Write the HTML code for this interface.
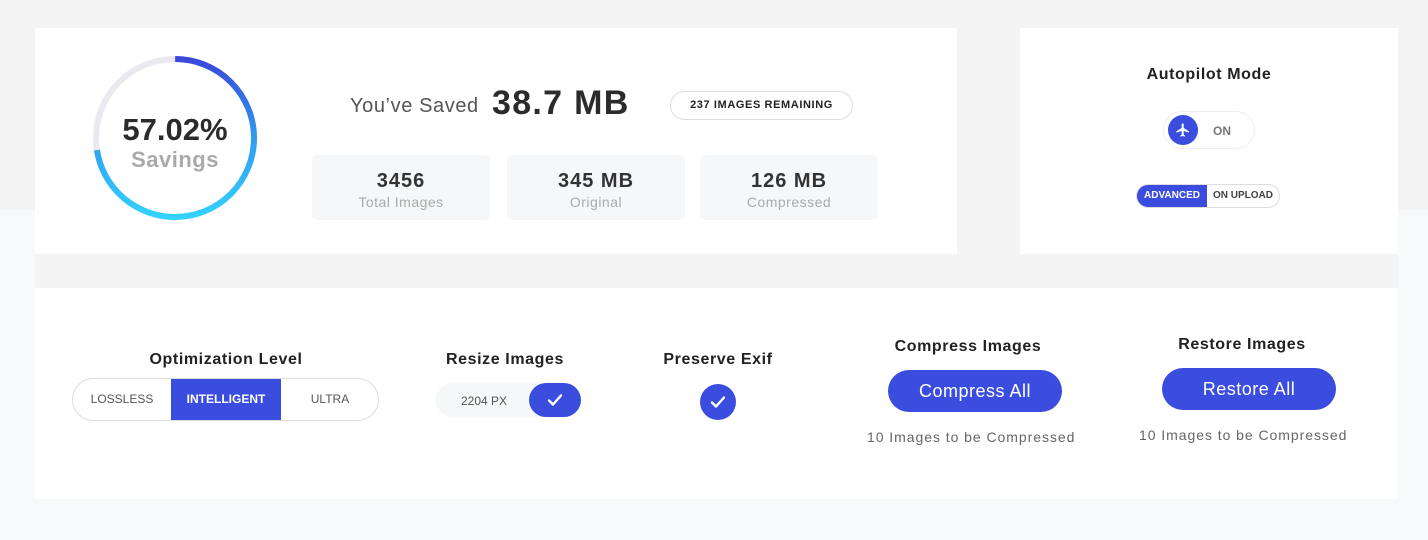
<!DOCTYPE html>
<html><head><meta charset="utf-8"><style>
*{margin:0;padding:0;box-sizing:border-box}
body{width:1428px;height:540px;position:relative;background:#f8f9fb;font-family:"Liberation Sans",sans-serif;overflow:hidden}
.a{position:absolute}
.card{position:absolute;background:#fff}
.c{text-align:center}
.stat{position:absolute;top:155px;width:178px;height:65px;background:#f6f7f9;border-radius:5px;text-align:center}
.stat b{display:block;font-size:20px;color:#333;margin-top:15px;letter-spacing:1px}
.stat span{display:block;font-size:14px;color:#aaa;margin-top:1px;letter-spacing:.5px}
.h{font-size:16px;color:#222;letter-spacing:.6px;font-weight:bold}
.btn{position:absolute;background:#3b4ddf;color:#fff;border-radius:21px;font-size:18px;text-align:center;line-height:42px;letter-spacing:.5px}
.sub{position:absolute;font-size:14px;color:#666;letter-spacing:.95px}
</style></head><body>
<div class="a" style="left:0;top:0;width:1428px;height:210px;background:#f4f4f4"></div>
<div class="a" style="left:35px;top:210px;width:1363px;height:78px;background:#f4f4f4"></div>
<div class="card" style="left:35px;top:28px;width:922px;height:226px"></div>
<div class="card" style="left:1020px;top:28px;width:378px;height:226px"></div>
<div class="card" style="left:34px;top:288px;width:1364px;height:211px"></div>

<svg class="a" style="left:92px;top:55px" width="166" height="166" viewBox="0 0 166 166">
<defs><linearGradient id="g" gradientUnits="userSpaceOnUse" x1="0" y1="4" x2="0" y2="162"><stop offset="0" stop-color="#3b47dc"/><stop offset="0.5" stop-color="#2f9bef"/><stop offset="1" stop-color="#33d2ff"/></linearGradient></defs>
<circle cx="83" cy="83" r="79" fill="none" stroke="#e9e9ef" stroke-width="6"/>
<circle cx="83" cy="83" r="79" fill="none" stroke="url(#g)" stroke-width="6" stroke-dasharray="360 136.4" stroke-dashoffset="124.1"/>
</svg>
<div class="a c" style="left:95px;top:112px;width:160px;font-size:31px;font-weight:bold;color:#2b2b2b">57.02%</div>
<div class="a c" style="left:95px;top:147px;width:160px;font-size:22px;font-weight:bold;color:#aaa;letter-spacing:.5px">Savings</div>

<div class="a" style="left:350px;top:95px;font-size:20px;color:#555;letter-spacing:.6px">You’ve Saved</div>
<div class="a" style="left:492px;top:84px;font-size:34px;font-weight:bold;color:#2b2b2b;letter-spacing:1.3px">38.7 MB</div>
<div class="a c" style="left:670px;top:91px;width:183px;height:29px;border:1px solid #ddd;border-radius:15px;font-size:11px;font-weight:bold;line-height:27px;color:#222;letter-spacing:.6px">237 IMAGES REMAINING</div>
<div class="stat" style="left:312px"><b>3456</b><span>Total Images</span></div>
<div class="stat" style="left:507px"><b>345 MB</b><span>Original</span></div>
<div class="stat" style="left:700px"><b>126 MB</b><span>Compressed</span></div>

<div class="a c h" style="left:1020px;top:66px;width:378px">Autopilot Mode</div>
<div class="a" style="left:1163px;top:111px;width:92px;height:38px;border:1px solid #eee;border-radius:19px"></div>
<div class="a" style="left:1168px;top:115px;width:30px;height:30px;border-radius:50%;background:#3b4ddf"></div>
<svg class="a" style="left:1175px;top:122px" width="16" height="16" viewBox="0 0 24 24"><path fill="#fff" d="M21 16v-2l-8-5V3.5a1.5 1.5 0 0 0-3 0V9l-8 5v2l8-2.5V19l-2 1.5V22l3.5-1 3.5 1v-1.5L13 19v-5.5z"/></svg>
<div class="a" style="left:1213px;top:124px;font-size:12px;font-weight:bold;color:#777">ON</div>
<div class="a" style="left:1136px;top:184px;width:144px;height:24px;border:1px solid #ddd;border-radius:12px;overflow:hidden;font-size:10px;font-weight:bold;line-height:22px">
<span class="a c" style="left:0;top:0;width:70px;height:22px;background:#3b4ddf;color:#fff">ADVANCED</span>
<span class="a c" style="left:70px;top:0;width:72px;color:#444">ON UPLOAD</span></div>

<div class="a c h" style="left:73px;top:351px;width:306px">Optimization Level</div>
<div class="a" style="left:72px;top:378px;width:307px;height:43px;border:1px solid #ddd;border-radius:22px;overflow:hidden;font-size:12px;line-height:41px;color:#555">
<span class="a c" style="left:0;width:98px">LOSSLESS</span>
<span class="a c" style="left:98px;width:110px;height:41px;background:#3b4ddf;color:#fff;font-weight:bold">INTELLIGENT</span>
<span class="a c" style="left:208px;width:98px">ULTRA</span></div>

<div class="a c h" style="left:425px;top:351px;width:160px">Resize Images</div>
<div class="a" style="left:436px;top:383px;width:145px;height:34px;background:#f6f7f9;border-radius:17px"></div>
<div class="a" style="left:461px;top:394px;font-size:12px;color:#555">2204 PX</div>
<div class="a" style="left:529px;top:383px;width:52px;height:34px;background:#3b4ddf;border-radius:17px"></div>
<svg class="a" style="left:545px;top:390px" width="20" height="20" viewBox="0 0 20 20"><path d="M4 10.5l4 4 8-9" fill="none" stroke="#fff" stroke-width="2.4" stroke-linecap="round" stroke-linejoin="round"/></svg>

<div class="a c h" style="left:638px;top:351px;width:160px">Preserve Exif</div>
<div class="a" style="left:700px;top:384px;width:36px;height:36px;border-radius:50%;background:#3b4ddf"></div>
<svg class="a" style="left:708px;top:392px" width="20" height="20" viewBox="0 0 20 20"><path d="M4 10.5l4 4 8-9" fill="none" stroke="#fff" stroke-width="2.4" stroke-linecap="round" stroke-linejoin="round"/></svg>

<div class="a c h" style="left:868px;top:338px;width:200px">Compress Images</div>
<div class="btn" style="left:888px;top:370px;width:174px">Compress All</div>
<div class="sub" style="left:867px;top:429px">10 Images to be Compressed</div>

<div class="a c h" style="left:1142px;top:336px;width:200px">Restore Images</div>
<div class="btn" style="left:1162px;top:368px;width:174px">Restore All</div>
<div class="sub" style="left:1139px;top:427px">10 Images to be Compressed</div>
</body></html>
